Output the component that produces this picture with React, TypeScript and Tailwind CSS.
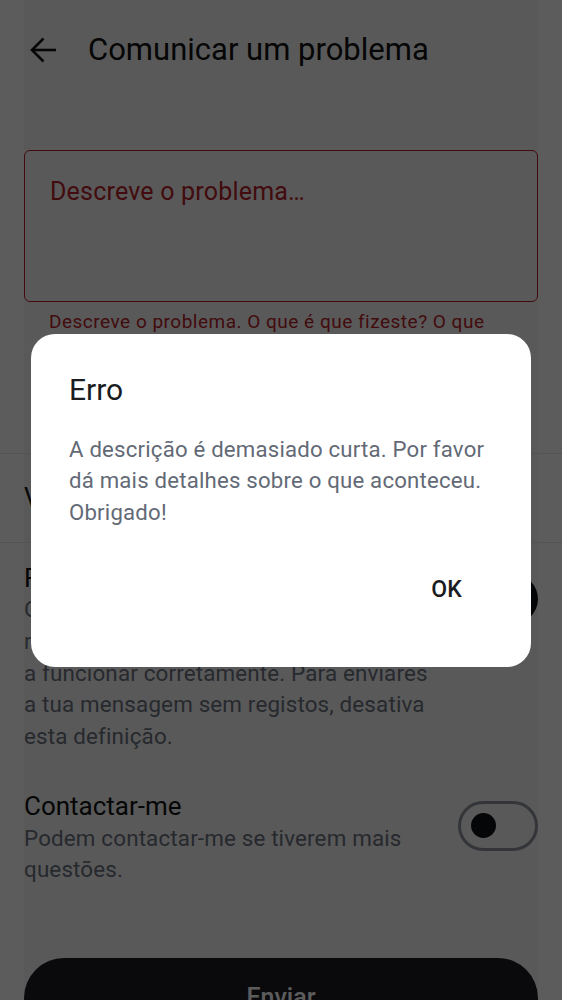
import React from "react";

const font = { fontFamily: "Roboto, 'Noto Sans', sans-serif" };

function BackArrow() {
  return (
    <svg width="28" height="28" viewBox="0 0 28 28" fill="none" stroke="#111111" strokeWidth="2.6" strokeLinecap="butt">
      <path d="M27 14H3" />
      <path d="M14.5 2.5 3 14l11.5 11.5" />
    </svg>
  );
}

function Toggle({ on }: { on: boolean }) {
  if (on) {
    return (
      <div className="mt-[12px] flex h-[50px] w-[80px] shrink-0 items-center justify-end rounded-full bg-[#0f1115] px-[7px]">
        <div className="h-[34px] w-[34px] rounded-full bg-white" />
      </div>
    );
  }
  return (
    <div className="mt-[12px] flex h-[50px] w-[80px] shrink-0 items-center rounded-full border-[3px] border-[#8f949c] px-[10px]">
      <div className="h-[25px] w-[25px] rounded-full bg-[#0f1115]" />
    </div>
  );
}

export default function App() {
  return (
    <div className="relative h-[1000px] w-full overflow-hidden bg-white" style={font}>
      <div className="mx-[24px] min-h-full bg-[#f7f7f7]">
        <header className="flex h-[100px] items-center gap-[31px] pl-[5px] pb-[1px]">
          <BackArrow />
          <h1 className="text-[31px] leading-[38px] text-[#111111]">Comunicar um problema</h1>
        </header>

        <div className="mt-[50px] h-[152px] rounded-[6px] border-[1.5px] border-[#b8232a] px-[25px] pt-[25px]">
          <p className="text-[25px] leading-[32px] tracking-[0.2px] text-[#b8232a]">Descreve o problema…</p>
        </div>
        <p className="mt-[4px] px-[25px] text-[19px] leading-[32px] tracking-[0.5px] text-[#b8232a]">
          Descreve o problema. O que é que fizeste? O que aconteceu?
        </p>

        <div className="-mx-[24px] mt-[83px] border-t border-[#e5e7eb]" />
        <div className="flex h-[88px] items-center">
          <p className="text-[25px] leading-[32px] text-[#111111]">Versão da aplicação</p>
        </div>
        <div className="-mx-[24px] border-t border-[#e5e7eb]" />

        <div className="mt-[19px] flex items-start justify-between">
          <div className="w-[420px]">
            <p className="text-[26px] leading-[32px] text-[#111111]">Registos de diagnóstico</p>
            <p className="text-[22.4px] leading-[31.75px] tracking-[0.15px] text-[#6b7280]">
              O envio de registos ajuda-nos a
              <br />
              resolver o problema e a pôr tudo
              <br />
              a funcionar corretamente. Para enviares
              <br />
              a tua mensagem sem registos, desativa
              <br />
              esta definição.
            </p>
          </div>
          <Toggle on />
        </div>

        <div className="mt-[36px] flex items-start justify-between">
          <div className="w-[420px]">
            <p className="text-[26px] leading-[34px] text-[#111111]">Contactar-me</p>
            <p className="text-[22.4px] leading-[31.5px] tracking-[0.15px] text-[#6b7280]">
              Podem contactar-me se tiverem mais
              <br />
              questões.
            </p>
          </div>
          <Toggle on={false} />
        </div>

        <button className="mt-[72px] h-[80px] w-full rounded-full bg-[#1c1e24] text-[25px] font-medium text-white">
          Enviar
        </button>
      </div>

      <div className="absolute inset-0 flex items-center justify-center bg-black/[0.64]">
        <div className="h-[333px] w-[500px] rounded-[24px] bg-white pt-[38px]">
          <h2 className="px-[38px] text-[30px] leading-[36px] text-[#1b1c1f]">Erro</h2>
          <p className="mt-[26px] px-[38px] text-[22.2px] leading-[31.5px] tracking-[0.2px] text-[#636a76]">
            A descrição é demasiado curta. Por favor dá mais detalhes sobre o que aconteceu. Obrigado!
          </p>
          <div className="mt-[38px] flex justify-end pr-[57px]">
            <button className="h-[48px] px-[12px] text-[23px] font-medium tracking-[0.2px] text-[#1b1c1f]">OK</button>
          </div>
        </div>
      </div>
    </div>
  );
}
